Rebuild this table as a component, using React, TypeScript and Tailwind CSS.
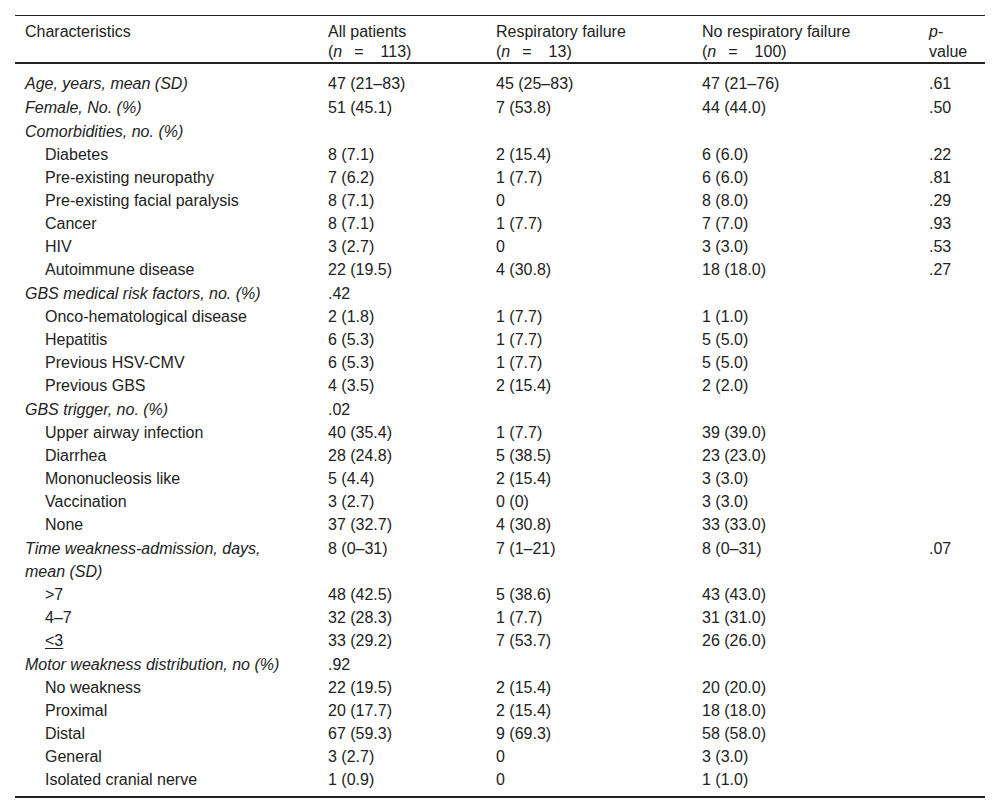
type Row = {
  label: React.ReactNode;
  cat?: boolean;
  cells: string[];
};

const rows: Row[] = [
  { label: "Age, years, mean (SD)", cat: true, cells: ["47 (21–83)", "45 (25–83)", "47 (21–76)", ".61"] },
  { label: "Female, No. (%)", cat: true, cells: ["51 (45.1)", "7 (53.8)", "44 (44.0)", ".50"] },
  { label: "Comorbidities, no. (%)", cat: true, cells: ["", "", "", ""] },
  { label: "Diabetes", cells: ["8 (7.1)", "2 (15.4)", "6 (6.0)", ".22"] },
  { label: "Pre-existing neuropathy", cells: ["7 (6.2)", "1 (7.7)", "6 (6.0)", ".81"] },
  { label: "Pre-existing facial paralysis", cells: ["8 (7.1)", "0", "8 (8.0)", ".29"] },
  { label: "Cancer", cells: ["8 (7.1)", "1 (7.7)", "7 (7.0)", ".93"] },
  { label: "HIV", cells: ["3 (2.7)", "0", "3 (3.0)", ".53"] },
  { label: "Autoimmune disease", cells: ["22 (19.5)", "4 (30.8)", "18 (18.0)", ".27"] },
  { label: "GBS medical risk factors, no. (%)", cat: true, cells: [".42", "", "", ""] },
  { label: "Onco-hematological disease", cells: ["2 (1.8)", "1 (7.7)", "1 (1.0)", ""] },
  { label: "Hepatitis", cells: ["6 (5.3)", "1 (7.7)", "5 (5.0)", ""] },
  { label: "Previous HSV-CMV", cells: ["6 (5.3)", "1 (7.7)", "5 (5.0)", ""] },
  { label: "Previous GBS", cells: ["4 (3.5)", "2 (15.4)", "2 (2.0)", ""] },
  { label: "GBS trigger, no. (%)", cat: true, cells: [".02", "", "", ""] },
  { label: "Upper airway infection", cells: ["40 (35.4)", "1 (7.7)", "39 (39.0)", ""] },
  { label: "Diarrhea", cells: ["28 (24.8)", "5 (38.5)", "23 (23.0)", ""] },
  { label: "Mononucleosis like", cells: ["5 (4.4)", "2 (15.4)", "3 (3.0)", ""] },
  { label: "Vaccination", cells: ["3 (2.7)", "0 (0)", "3 (3.0)", ""] },
  { label: "None", cells: ["37 (32.7)", "4 (30.8)", "33 (33.0)", ""] },
  {
    label: (
      <>
        Time weakness-admission, days,
        <br />
        mean (SD)
      </>
    ),
    cat: true,
    cells: ["8 (0–31)", "7 (1–21)", "8 (0–31)", ".07"],
  },
  { label: ">7", cells: ["48 (42.5)", "5 (38.6)", "43 (43.0)", ""] },
  { label: "4–7", cells: ["32 (28.3)", "1 (7.7)", "31 (31.0)", ""] },
  { label: <span className="underline underline-offset-[2px]">&lt;3</span>, cells: ["33 (29.2)", "7 (53.7)", "26 (26.0)", ""] },
  { label: "Motor weakness distribution, no (%)", cat: true, cells: [".92", "", "", ""] },
  { label: "No weakness", cells: ["22 (19.5)", "2 (15.4)", "20 (20.0)", ""] },
  { label: "Proximal", cells: ["20 (17.7)", "2 (15.4)", "18 (18.0)", ""] },
  { label: "Distal", cells: ["67 (59.3)", "9 (69.3)", "58 (58.0)", ""] },
  { label: "General", cells: ["3 (2.7)", "0", "3 (3.0)", ""] },
  { label: "Isolated cranial nerve", cells: ["1 (0.9)", "0", "1 (1.0)", ""] },
];

function N({ v }: { v: string }) {
  return (
    <>
      (<i>n</i>
      <span className="ml-[12px] mr-[17px]">=</span>
      {v})
    </>
  );
}

export default function App() {
  return (
    <div
      className="min-h-screen bg-white px-[15px] pt-[15px] text-[16px] text-[#222]"
      style={{ fontFamily: '"Liberation Sans", Arial, sans-serif' }}
    >
      <table className="w-[970px] table-fixed border-collapse">
        <colgroup>
          <col className="w-[303px]" />
          <col className="w-[168px]" />
          <col className="w-[206px]" />
          <col className="w-[227px]" />
          <col className="w-[66px]" />
        </colgroup>
        <thead>
          <tr className="border-t border-b-2 border-t-[#222] border-b-[#222] align-top leading-[20px]">
            <th className="pl-[10px] pr-[6px] pt-[6px] pb-0 text-left font-normal">Characteristics</th>
            <th className="pl-[10px] pr-[6px] pt-[6px] pb-0 text-left font-normal">
              All patients
              <br />
              <N v="113" />
            </th>
            <th className="pl-[10px] pr-[6px] pt-[6px] pb-0 text-left font-normal">
              Respiratory failure
              <br />
              <N v="13" />
            </th>
            <th className="pl-[10px] pr-[6px] pt-[6px] pb-0 text-left font-normal">
              No respiratory failure
              <br />
              <N v="100" />
            </th>
            <th className="pl-[10px] pr-[4px] pt-[6px] pb-0 text-left font-normal">
              <i>p</i>-
              <br />
              value
            </th>
          </tr>
        </thead>
        <tbody className="border-b-2 border-b-[#222]">
          <tr>
            <td colSpan={5} className="h-[8px] p-0" />
          </tr>
          {rows.map((r, i) => (
            <tr key={i} className="align-top leading-[23px]">
              <td
                className={
                  r.cat
                    ? "pl-[10px] pr-[6px] pt-[1px] italic"
                    : "pl-[30px] pr-[6px]"
                }
              >
                {r.label}
              </td>
              {r.cells.map((c, j) => (
                <td key={j} className={r.cat ? "pl-[10px] pr-[6px] pt-[1px]" : "pl-[10px] pr-[6px]"}>
                  {c}
                </td>
              ))}
            </tr>
          ))}
          <tr>
            <td colSpan={5} className="h-[6px] p-0" />
          </tr>
        </tbody>
      </table>
    </div>
  );
}
